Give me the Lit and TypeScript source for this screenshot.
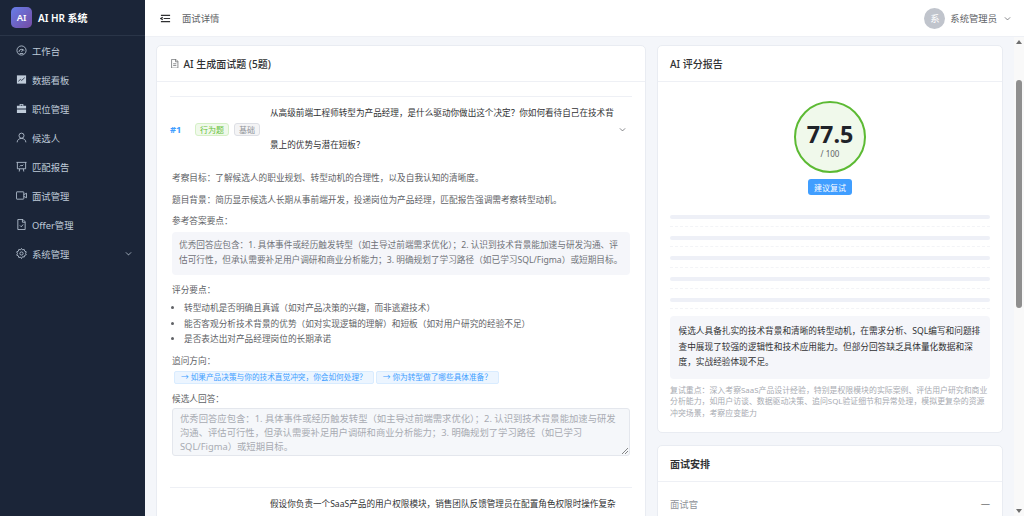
import { LitElement, html, css, svg } from 'lit';
import { customElement } from 'lit/decorators.js';

const icons: Record<string, unknown> = {
  odometer: svg`<circle cx="12" cy="12" r="10"/><path d="M6.500 15a5.800 5.800 0 0 1 11-2.500M12 15l3.500-6M8 18.500h8"/>`,
  chart: svg`<path fill="currentColor" stroke="none" d="M2 3h20v18H2z"/><path stroke="#1b2538" d="M5 16l4.500-4 3 2 6.500-6"/>`,
  case: svg`<path fill="currentColor" stroke="none" d="M8 2h8v4h6v16H2V6h6zM10 4v2h4V4zM2 12v2h20v-2z"/>`,
  user: svg`<circle cx="12" cy="8" r="5.500"/><path d="M2.500 22.500c0-5 4-8.500 9.500-8.500s9.500 3.500 9.500 8.500"/>`,
  board: svg`<path d="M1 3h22M3 3v14h18V3M8 17l-1 6M16 17l1 6M8 12l3-3 2 2 3-3"/>`,
  video: svg`<rect x="1" y="4" width="16" height="16" rx="1"/><path d="M17 10l6-3v10l-6-3"/>`,
  doc: svg`<path d="M4 1h11l5 5v17H4zM14 1v6h6M8.500 14l3 3 4-5"/>`,
  setting: svg`<circle cx="12" cy="12" r="3.500"/><path d="M12 1l2.200 3 3.700-.8 1 3.700 3.600 1.500-1.700 3.100 1.700 3.100-3.600 1.500-1 3.700-3.700-.8L12 23l-2.200-3-3.700.8-1-3.700-3.600-1.500L3.200 12 1.500 8.400l3.600-1.500 1-3.700 3.700.8z"/>`,
  down: svg`<path stroke-width="2.600" d="M3 8l9 9 9-9"/>`,
  title: svg`<path d="M4 1h11l5 5v17H4zM14 1v6h6M8 12h8M8 16.500h8"/>`,
};

const icon = (name: string) =>
  html`<svg class="ic" viewBox="0 0 24 24" fill="none" stroke="currentColor" stroke-width="1.800">${icons[name]}</svg>`;

// body copy uses full-width punctuation throughout
const PUNCT: Record<string, string> = {
  ',': '\uFF0C', ':': '\uFF1A', ';': '\uFF1B', '(': '\uFF08', ')': '\uFF09', '?': '\uFF1F',
};
const zh = (s: string) => s.replace(/[,:;()?]/g, (c) => PUNCT[c]);

const menu = [
  ['odometer', '工作台'],
  ['chart', '数据看板'],
  ['case', '职位管理'],
  ['user', '候选人'],
  ['board', '匹配报告'],
  ['video', '面试管理'],
  ['doc', 'Offer管理'],
  ['setting', '系统管理'],
];

const answer = zh(
  '优秀回答应包含:1. 具体事件或经历触发转型(如主导过前端需求优化);2. 认识到技术背景能加速与研发沟通、评估可行性,但承认需要补足用户调研和商业分析能力;3. 明确规划了学习路径(如已学习SQL/Figma)或短期目标。'
);

@customElement('app-root')
export class AppRoot extends LitElement {
  static styles = css`
    :host {
      display: flex;
      width: 1024px;
      height: 516px;
      overflow: hidden;
      background: #f4f6fa;
      color: #303133;
      font-family: 'Noto Sans', 'Noto Sans CJK SC', sans-serif;
      font-size: 9.33px;
    }
    .ic { width: 1em; height: 1em; flex: none; display: block; }

    .side { width: 145px; flex: none; background: #1b2538; color: #bfcbd9; }
    .brand {
      height: 36px; display: flex; align-items: center; gap: 6px; padding-left: 11px;
      box-sizing: border-box; border-bottom: 1px solid #2a3548;
      color: #fff; font-size: 10px; font-weight: 600;
    }
    .logo {
      width: 21px; height: 21px; border-radius: 5px; font-size: 9.33px;
      background: linear-gradient(135deg, #667eea, #764ba2);
      display: flex; align-items: center; justify-content: center;
    }
    .items { display: flex; flex-direction: column; }
    .item {
      height: 29px; display: flex; align-items: center; gap: 5px; padding-left: 16px;
      box-sizing: border-box;
    }
    .item .ic { font-size: 11px; }
    .item .more { margin-left: auto; margin-right: 13px; }
    .item .more .ic { font-size: 7px; }

    .main { flex: 1; min-width: 0; display: flex; flex-direction: column; }
    .top {
      height: 37px; flex: none; box-sizing: border-box; background: #fff;
      border-bottom: 1px solid #eef0f5;
      display: flex; align-items: center; padding: 0 13px 0 15px; color: #606266;
    }
    .fold { font-size: 11px; color: #303133; margin-right: 11px; }
    .who { margin-left: auto; display: flex; align-items: center; gap: 5px; }
    .avatar {
      width: 21px; height: 21px; border-radius: 50%; background: #c0c4cc; color: #fff;
      display: flex; align-items: center; justify-content: center;
    }
    .who .ic { font-size: 7px; margin-left: 2px; }

    .body { flex: 1; min-height: 0; display: flex; }
    .scroll {
      flex: 1; min-width: 0; overflow: hidden; padding: 8px 11px;
      display: grid; grid-template-columns: 490px 346px; gap: 11px;
      align-items: start; align-content: start;
    }
    .bar { width: 10px; flex: none; background: #f9f9f9; display: flex; flex-direction: column; align-items: center; }
    .arrow { width: 0; height: 0; border: 3px solid transparent; margin-top: 3px; }
    .arrow.up { border-bottom: 4px solid #6f6f6f; border-top: 0; }
    .arrow.dn { border-top: 4px solid #6f6f6f; border-bottom: 0; margin: 0 0 3px; }
    .thumb { width: 6px; height: 228px; margin-top: 36px; border-radius: 3px; background: #8f8f8f; }
    .fill { flex: 1; }

    .col { display: flex; flex-direction: column; gap: 12px; }
    .card { background: #fff; border: 1px solid #e9ecf2; border-radius: 5px; }
    .head {
      height: 36px; box-sizing: border-box; border-bottom: 1px solid #eef0f5;
      padding: 0 13px; display: flex; align-items: center; gap: 4px;
      font-size: 10px; font-weight: 500;
    }
    .head .ic { font-size: 9.500px; color: #606266; }
    .col .head { padding: 0 12px; }

    .qs { padding: 14px 13px 0; height: 500px; }
    .q { border-top: 1px solid #eef0f5; }
    .q-row { display: flex; align-items: center; }
    .num { width: 25px; flex: none; color: #409eff; font-weight: 700; }
    .tags { width: 75px; flex: none; display: flex; gap: 5px; }
    .tag {
      height: 13px; box-sizing: border-box; padding: 0 4px;
      border: 1px solid; border-radius: 3px; font-size: 8px; white-space: nowrap;
      display: flex; align-items: center;
    }
    .tag.ok { color: #67c23a; background: #f0f9eb; border-color: #d5f0c6; }
    .tag.plain { color: #909399; background: #f4f4f5; border-color: #dddfe5; }
    .q-text { width: 348px; flex: none; font-size: 8.600px; line-height: 32px; color: #303133; }
    .q-row > .ic { font-size: 7px; margin-left: 1px; color: #606266; }

    .detail { padding: 10px 2px 0; font-size: 8.670px; color: #606266; line-height: 15.500px; }
    .lab { margin-bottom: 6px; }
    .box {
      margin: -4px 0 8px; padding: 6px 7px; background: #f5f6fa; border-radius: 4px; color: #6f7278;
    }
    ul { margin: -3px 0 6px; padding: 0 0 0 12px; }
    li { line-height: 15.500px; }
    .follow { display: flex; gap: 2px; margin: -4px 0 8px; padding-left: 2px; }
    .chip {
      height: 13px; box-sizing: border-box; padding: 0 6px; border: 1px solid #d9ecff;
      background: #ecf5ff; color: #409eff; border-radius: 2px; font-size: 7.670px; white-space: nowrap;
      display: flex; align-items: center;
    }
    .input {
      margin-top: -6px; height: 48px; box-sizing: border-box; padding: 3px 7px 0;
      background: #f5f7fa; border: 1px solid #e4e7ed; border-radius: 3px;
      color: #a8abb2; font-size: 9.330px; line-height: 14px; position: relative;
    }
    .grip { position: absolute; right: 1px; bottom: 1px; width: 6px; height: 6px; color: #555; }
    .next { margin-top: 31px; padding-left: 100px; font-size: 8.600px; line-height: 32px; height: 32px; overflow: hidden; }

    .score { padding: 19px 12px 13px; display: flex; flex-direction: column; }
    .ring {
      align-self: center; width: 72px; height: 72px; box-sizing: border-box; border-radius: 50%;
      padding-top: 6px; border: 2px solid #5cba33; background: #f0f9eb;
      display: flex; flex-direction: column; align-items: center; justify-content: center;
    }
    .val { font-size: 23.300px; font-weight: 700; line-height: 28px; color: #1f2329; }
    .of { font-size: 8px; line-height: 12px; color: #606266; }
    .verdict {
      align-self: center; margin-top: 6px; height: 16px; padding: 0 6px; box-sizing: border-box;
      background: #409eff; color: #fff; border-radius: 3px; font-size: 8px;
      display: flex; align-items: center;
    }
    .rows { margin-top: 20px; display: flex; flex-direction: column; gap: 9.200px; }
    .row { height: 11.500px; box-sizing: border-box; border-bottom: 1px dashed #f3f4f7; }
    .row i { display: block; height: 4px; border-radius: 2px; background: #eef0f7; }
    .sum {
      margin-top: 7px; padding: 8px 8.500px; background: #f5f6fa; border-radius: 4px;
      font-size: 8.670px; line-height: 15.500px;
    }
    .note { margin-top: 6px; font-size: 7.900px; line-height: 11.500px; color: #a8abb2; }

    .plan { height: 100px; }
    .plan .head { font-weight: 700; }
    .plan-row {
      display: flex; justify-content: space-between; padding: 15px 12px;
      color: #909399;
    }
    .plan-row b { font-weight: 400; color: #303133; }
  `;

  render() {
    return html`
      <aside class="side">
        <div class="brand"><span class="logo">AI</span>AI HR 系统</div>
        <nav class="items">
          ${menu.map(([name, label], i) => html`
            <div class="item">
              ${icon(name)}<span>${label}</span>
              ${i === menu.length - 1 ? html`<span class="more">${icon('down')}</span>` : ''}
            </div>`)}
        </nav>
      </aside>
      <div class="main">
        <header class="top">
          <span class="fold"><svg class="ic" viewBox="0 0 24 24" fill="none" stroke="currentColor" stroke-width="2.600"><path d="M2 5h20M8 12h14M2 19h20M6 9.500l-4 2.500 4 2.500"/></svg></span>
          <span>面试详情</span>
          <div class="who">
            <span class="avatar">系</span><span>系统管理员</span>${icon('down')}
          </div>
        </header>
        <div class="body">
          <div class="scroll">
            <section class="card">
              <div class="head">${icon('title')}<span>AI 生成面试题 (5题)</span></div>
              <div class="qs">
                <div class="q">
                  <div class="q-row">
                    <span class="num">#1</span>
                    <span class="tags"><span class="tag ok">行为题</span><span class="tag plain">基础</span></span>
                    <span class="q-text">${zh('从高级前端工程师转型为产品经理,是什么驱动你做出这个决定?你如何看待自己在技术背景上的优势与潜在短板?')}</span>
                    ${icon('down')}
                  </div>
                  <div class="detail">
                    <div class="lab">${zh('考察目标:了解候选人的职业规划、转型动机的合理性,以及自我认知的清晰度。')}</div>
                    <div class="lab">${zh('题目背景:简历显示候选人长期从事前端开发,投递岗位为产品经理,匹配报告强调需考察转型动机。')}</div>
                    <div class="lab">${zh('参考答案要点:')}</div>
                    <div class="box">${answer}</div>
                    <div class="lab">${zh('评分要点:')}</div>
                    <ul>
                      <li>${zh('转型动机是否明确且真诚(如对产品决策的兴趣,而非逃避技术)')}</li>
                      <li>${zh('能否客观分析技术背景的优势(如对实现逻辑的理解)和短板(如对用户研究的经验不足)')}</li>
                      <li>是否表达出对产品经理岗位的长期承诺</li>
                    </ul>
                    <div class="lab">${zh('追问方向:')}</div>
                    <div class="follow">
                      <span class="chip">${zh('→ 如果产品决策与你的技术直觉冲突,你会如何处理?')}</span>
                      <span class="chip">${zh('→ 你为转型做了哪些具体准备?')}</span>
                    </div>
                    <div class="lab">${zh('候选人回答:')}</div>
                    <div class="input">${answer}
                      <svg class="grip" viewBox="0 0 6 6" stroke="currentColor" stroke-width=".7"><path d="M0 6l6-6M3 6l3-3"/></svg>
                    </div>
                  </div>
                </div>
                <div class="q next">${zh('假设你负责一个SaaS产品的用户权限模块,销售团队反馈管理员在配置角色权限时操作复杂')}</div>
              </div>
            </section>
            <div class="col">
              <section class="card">
                <div class="head"><span>AI 评分报告</span></div>
                <div class="score">
                  <div class="ring"><span class="val">77.5</span><span class="of">/ 100</span></div>
                  <div class="verdict">建议复试</div>
                  <div class="rows">
                    ${[0, 1, 2, 3, 4].map(() => html`<div class="row"><i></i></div>`)}
                  </div>
                  <div class="sum">${zh('候选人具备扎实的技术背景和清晰的转型动机,在需求分析、SQL编写和问题排查中展现了较强的逻辑性和技术应用能力。但部分回答缺乏具体量化数据和深度,实战经验体现不足。')}</div>
                  <div class="note">${zh('复试重点:深入考察SaaS产品设计经验,特别是权限模块的实际案例、评估用户研究和商业分析能力,如用户访谈、数据驱动决策、追问SQL验证细节和异常处理,模拟更复杂的资源冲突场景,考察应变能力')}</div>
                </div>
              </section>
              <section class="card plan">
                <div class="head"><span>面试安排</span></div>
                <div class="plan-row"><span>面试官</span><b>—</b></div>
              </section>
            </div>
          </div>
          <div class="bar">
            <span class="arrow up"></span>
            <span class="thumb"></span>
            <span class="fill"></span>
            <span class="arrow dn"></span>
          </div>
        </div>
      </div>
    `;
  }
}
